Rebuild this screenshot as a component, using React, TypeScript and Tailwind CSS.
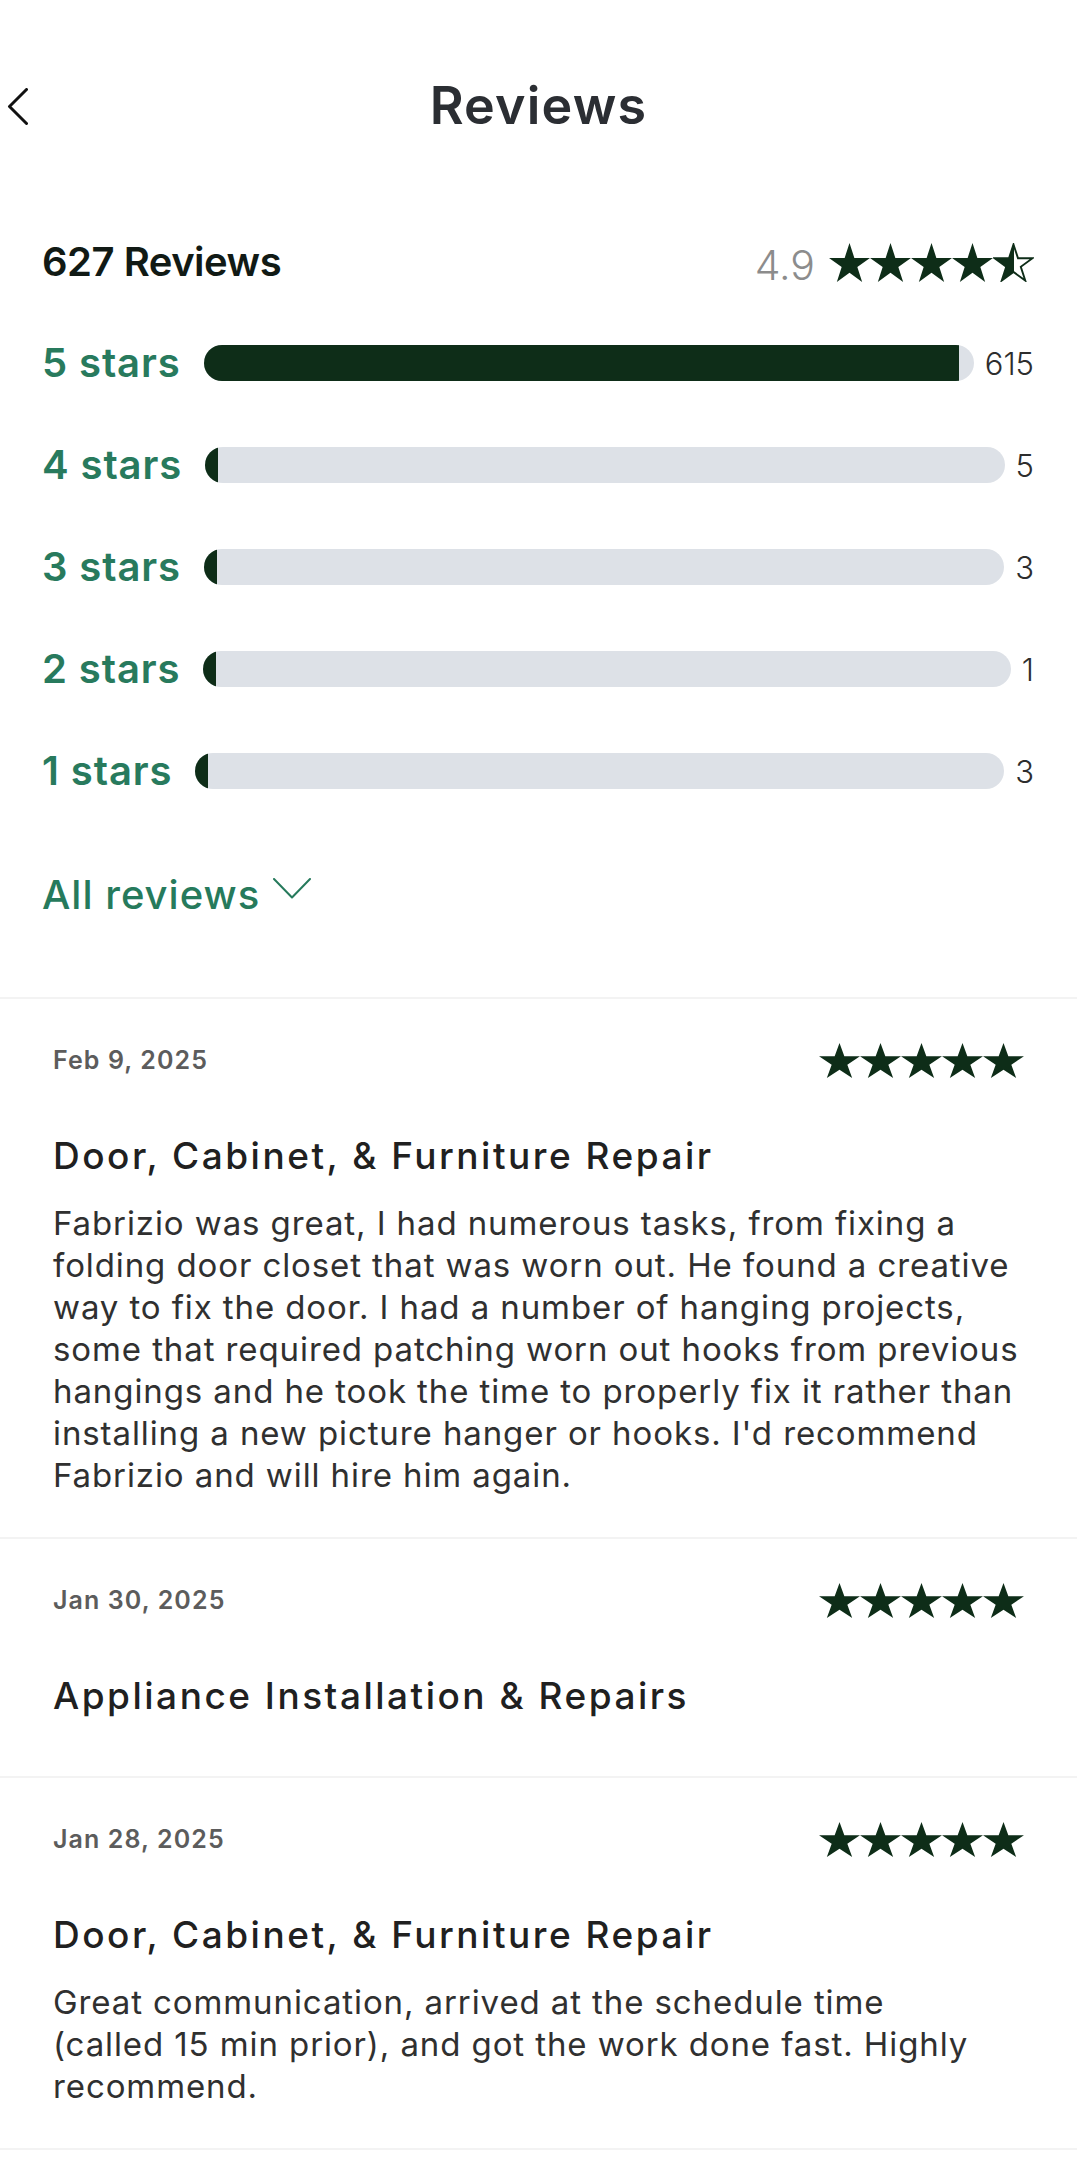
import React from "react";

const STAR = "20,0 24.72,14.5 39.97,14.51 27.64,23.48 32.34,37.99 20,29.03 7.66,37.99 12.36,23.48 0.03,14.51 15.28,14.5";

function Star({ w, h, kind = "full", id }: { w: number; h: number; kind?: "full" | "half"; id?: string }) {
  if (kind === "half") {
    return (
      <svg width={w} height={h} viewBox="-1.5 -1.5 43 41" preserveAspectRatio="none">
        <defs>
          <linearGradient id={id} x1="0" x2="1" y1="0" y2="0">
            <stop offset="50%" stopColor="#0e2d18" />
            <stop offset="50%" stopColor="#ffffff" />
          </linearGradient>
        </defs>
        <polygon points={STAR} fill={`url(#${id})`} stroke="#0e2d18" strokeWidth="2" strokeLinejoin="miter" />
      </svg>
    );
  }
  return (
    <svg width={w} height={h} viewBox="0 0 40 38" preserveAspectRatio="none">
      <polygon points={STAR} fill="#0e2d18" />
    </svg>
  );
}

const bars = [
  { label: "5 stars", count: 615 },
  { label: "4 stars", count: 5 },
  { label: "3 stars", count: 3 },
  { label: "2 stars", count: 1 },
  { label: "1 stars", count: 3 },
];

const reviews = [
  {
    date: "Feb 9, 2025",
    title: "Door, Cabinet, & Furniture Repair",
    lines: [
      "Fabrizio was great, I had numerous tasks, from fixing a",
      "folding door closet that was worn out. He found a creative",
      "way to fix the door. I had a number of hanging projects,",
      "some that required patching worn out hooks from previous",
      "hangings and he took the time to properly fix it rather than",
      "installing a new picture hanger or hooks. I'd recommend",
      "Fabrizio and will hire him again.",
    ],
  },
  { date: "Jan 30, 2025", title: "Appliance Installation & Repairs", lines: [] as string[] },
  {
    date: "Jan 28, 2025",
    title: "Door, Cabinet, & Furniture Repair",
    lines: [
      "Great communication, arrived at the schedule time",
      "(called 15 min prior), and got the work done fast. Highly",
      "recommend.",
    ],
  },
];

export default function App() {
  const total = 627;
  return (
    <div className="w-[1077px] min-h-[2181px] bg-white font-['Inter',sans-serif] overflow-hidden">
      {/* Header */}
      <div className="mt-[70px] h-[72px] grid grid-cols-[1fr_auto_1fr] items-center">
        <div className="pl-[7px] flex items-center">
          <svg width="21" height="37" viewBox="0 0 21 37" fill="none">
            <polyline points="19.5,1.5 2.5,18.5 19.5,35.5" stroke="#111" strokeWidth="3" strokeLinecap="round" strokeLinejoin="round" />
          </svg>
        </div>
        <h1 className="text-[52px] font-semibold text-[#2b2e33] leading-none tracking-[1.2px]">Reviews</h1>
        <div />
      </div>

      {/* Summary */}
      <div className="pl-[42px] pr-[43px]">
        <div className="mt-[100px] h-[40px] flex items-center justify-between">
          <div className="text-[40px] font-semibold text-[#111a15] leading-none tracking-[-0.5px]">627 Reviews</div>
          <div className="flex items-center">
            <span className="text-[41px] font-light text-[#8c8c8c] leading-none mr-[14px] mt-[6px]">4.9</span>
            <div className="flex">
              <Star w={41} h={39} />
              <Star w={41} h={39} />
              <Star w={41} h={39} />
              <Star w={41} h={39} />
              <Star w={41} h={39} kind="half" id="halfstar" />
            </div>
          </div>
        </div>

        <div className="mt-[63px] flex flex-col gap-[66px]">
          {bars.map((b) => (
            <div key={b.label} className="h-[36px] flex items-center">
              <div className="text-[40px] font-semibold text-[#287a5d] leading-none tracking-[0.9px] mr-[23px]">{b.label}</div>
              <div className="flex-1 h-[36px] rounded-full bg-[#dde1e7] overflow-hidden">
                <div
                  className="h-full bg-[#0e2d18] min-w-[13px]"
                  style={{ width: `${(b.count / total) * 100}%` }}
                />
              </div>
              <div className="ml-[11px] text-[31px] font-light text-[#2d2d2d] leading-none">{b.count}</div>
            </div>
          ))}
        </div>

        <div className="mt-[81px] h-[50px] flex items-center">
          <span className="text-[40px] font-medium text-[#267a5c] leading-none tracking-[1px]">All reviews</span>
          <svg className="ml-[13px] -mt-[14px]" width="38" height="21" viewBox="0 0 38 21" fill="none">
            <polyline points="1,1 19,19.5 37,1" stroke="#267a5c" strokeWidth="2" strokeLinecap="round" strokeLinejoin="round" />
          </svg>
        </div>
      </div>

      <div className="mt-[77px]">
        {reviews.map((r, i) => (
          <div key={i} className={`border-t-2 border-[#f3f3f3] px-[53px] pt-[44px] ${r.lines.length ? "pb-[41px]" : "pb-[56px]"}`}>
            <div className="h-[34px] flex items-center justify-between">
              <span className="text-[25px] font-semibold text-[#5c5c5c] leading-none tracking-[1.1px]">{r.date}</span>
              <div className="flex">
                {[0, 1, 2, 3, 4].map((k) => (
                  <Star key={k} w={41} h={35} />
                ))}
              </div>
            </div>
            <div className="mt-[55px] text-[37px] font-medium text-[#202020] leading-[48px] tracking-[2.5px] whitespace-nowrap">{r.title}</div>
            {r.lines.length > 0 && (
              <p className="mt-[22px] text-[33px] text-[#303030] leading-[42px] tracking-[0.9px] whitespace-pre">
                {r.lines.join("\n")}
              </p>
            )}
          </div>
        ))}
        <div className="border-t-2 border-[#f3f3f3]" />
      </div>
    </div>
  );
}
